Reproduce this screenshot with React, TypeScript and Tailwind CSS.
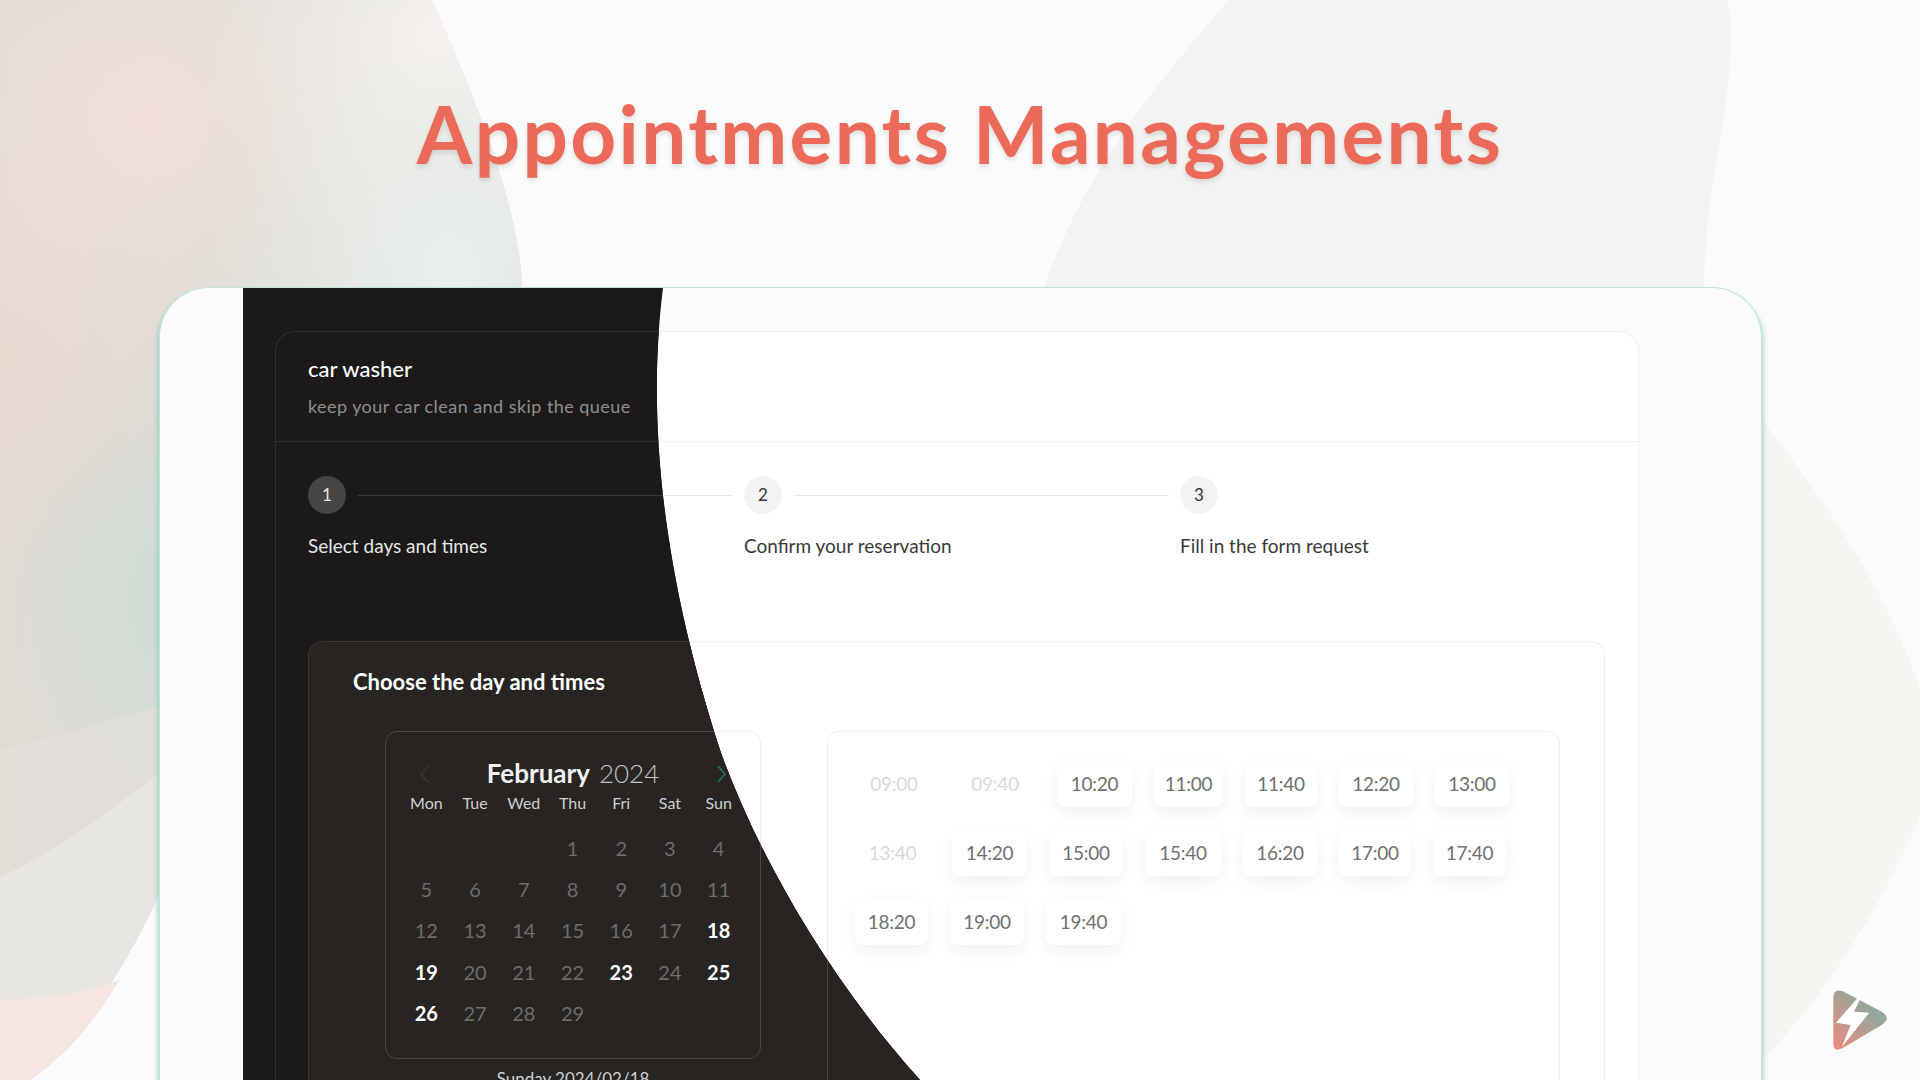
import React from "react";

const font = { fontFamily: "Lato, sans-serif" };

type Theme = {
  root: string; card: string; cardBorder: string; title: string; sub: string; stepOn: string; stepOff: string; stepLine: string; label: string;
  panel: string; panelTitle: string; box: string; month: string; year: string; dow: string; day: string; dayOn: string; chip: string; chipText: string; chipOff: string; foot: string;
};

const light: Theme = {
  root: "", card: "bg-white", cardBorder: "border-[#efefef]", title: "text-[#222]", sub: "text-[#777]", stepOn: "bg-[#f3f3f3] text-[#333]", stepOff: "bg-[#f3f3f3] text-[#333]", stepLine: "bg-[#e8e8e8]", label: "text-[#3a3a3a]",
  panel: "bg-white border-[#eeeeee]", panelTitle: "text-[#222]", box: "border-[#eeeeee]", month: "text-[#222]", year: "text-[#555]", dow: "text-[#555]", day: "text-[#999]", dayOn: "text-[#222]", chip: "bg-white shadow-[0_6px_16px_rgba(0,0,0,0.06)]", chipText: "text-[#6f6f6f]", chipOff: "text-[#d9d9d9]", foot: "text-[#333]",
};

const dark: Theme = {
  root: "bg-[#1b1a18]", card: "bg-[#1b1a18]", cardBorder: "border-[#302f2d]", title: "text-white", sub: "text-[#8f8e8c]", stepOn: "bg-[#474543] text-[#e5e5e5]", stepOff: "bg-[#474543] text-[#e5e5e5]", stepLine: "bg-[#3a3937]", label: "text-[#e6e6e6]",
  panel: "bg-[#272422] border-[#3a3836]", panelTitle: "text-white", box: "border-[#4a4846]", month: "text-[#f2f2f2]", year: "text-[#c4c4c4]", dow: "text-[#cfcfcf]", day: "text-[#6e6c6a]", dayOn: "text-white", chip: "bg-[#272422]", chipText: "text-[#aaa]", chipOff: "text-[#555]", foot: "text-[#d0d0d0]",
};

const weeks: (number | null)[][] = [
  [null, null, null, 1, 2, 3, 4],
  [5, 6, 7, 8, 9, 10, 11],
  [12, 13, 14, 15, 16, 17, 18],
  [19, 20, 21, 22, 23, 24, 25],
  [26, 27, 28, 29, null, null, null],
];
const activeDays = [18, 19, 23, 25, 26];

const slots = [
  { t: "09:00", w: "w-[78px]", off: true },
  { t: "09:40", w: "w-[80px]", off: true },
  { t: "10:20", w: "w-[75px]" },
  { t: "11:00", w: "w-[69px]" },
  { t: "11:40", w: "w-[72px]" },
  { t: "12:20", w: "w-[74px]" },
  { t: "13:00", w: "w-[74px]" },
  { t: "13:40", w: "w-[75px]", off: true },
  { t: "14:20", w: "w-[75px]" },
  { t: "15:00", w: "w-[74px]" },
  { t: "15:40", w: "w-[76px]" },
  { t: "16:20", w: "w-[74px]" },
  { t: "17:00", w: "w-[72px]" },
  { t: "17:40", w: "w-[73px]" },
  { t: "18:20", w: "w-[73px]" },
  { t: "19:00", w: "w-[74px]" },
  { t: "19:40", w: "w-[75px]" },
];

const steps = ["Select days and times", "Confirm your reservation", "Fill in the form request"];

const leftShape = "M0 0 H432 C480 110 520 210 522 288 L400 600 L160 892 C130 960 80 1040 30 1080 H0 Z";

function Screen({ th }: { th: Theme }) {
  return (
    <div className={`w-[1400px] h-[792px] pt-[43px] pl-[32px] ${th.root}`} style={font}>
      <div className={`w-[1364px] h-[749px] rounded-t-[20px] border-t border-x ${th.card} ${th.cardBorder}`}>
        <div className={`h-[110px] border-b pl-[32px] pt-[22px] ${th.cardBorder}`}>
          <div className={`text-[22px] leading-[30px] font-medium ${th.title}`}>car washer</div>
          <div className={`text-[18px] leading-[26px] mt-[9px] tracking-[0.45px] ${th.sub}`}>keep your car clean and skip the queue</div>
        </div>
        <div className="pl-[32px] pt-[34px] grid grid-cols-[436px_436px_200px] h-[199px]">
          {steps.map((s, i) => (
            <div key={s}>
              <div className="flex items-center h-[38px]">
                <div className={`w-[38px] h-[38px] rounded-full flex items-center justify-center text-[17px] ${i === 0 ? th.stepOn : th.stepOff}`}>{i + 1}</div>
                {i < 2 && <div className={`h-px ml-[12px] w-[375px] ${th.stepLine}`} />}
              </div>
              <div className={`mt-[19px] text-[19px] leading-[26px] ${th.label}`}>{s}</div>
            </div>
          ))}
        </div>
        <div className={`ml-[32px] w-[1297px] h-[440px] border rounded-t-[14px] ${th.panel}`}>
          <div className={`pl-[44px] pt-[25px] text-[22px] leading-[30px] font-bold ${th.panelTitle}`}>Choose the day and times</div>
          <div className="flex pl-[76px] pt-[34px] gap-[66px]">
            <div className="w-[376px]">
              <div className={`h-[328px] border rounded-[12px] relative ${th.box}`}>
                <svg className="absolute left-[33px] top-[32px]" width="12" height="20" viewBox="0 0 12 20" fill="none"><path d="M9 2 L2 10 L9 18" stroke="#2f3b36" strokeWidth="1.5" /></svg>
                <svg className="absolute left-[329px] top-[32px]" width="12" height="20" viewBox="0 0 12 20" fill="none"><path d="M3 2 L10 10 L3 18" stroke="#1f7a5c" strokeWidth="1.5" /></svg>
                <div className="text-center pt-[25px] text-[26px] leading-[32px]">
                  <span className={`font-bold ${th.month}`}>February</span>
                  <span className={`ml-[9px] font-light ${th.year}`}>2024</span>
                </div>
                <div className="grid grid-cols-7 w-[341px] ml-[16px]">
                  {["Mon", "Tue", "Wed", "Thu", "Fri", "Sat", "Sun"].map((d) => (
                    <div key={d} className={`text-center text-[16px] leading-[28px] ${th.dow}`}>{d}</div>
                  ))}
                </div>
                <div className="grid grid-cols-7 w-[341px] ml-[16px] mt-[10px] auto-rows-[41.4px]">
                  {weeks.flat().map((d, i) => (
                    <div key={i} className={`flex items-center justify-center text-[20px] ${d && activeDays.includes(d) ? `font-bold ${th.dayOn}` : th.day}`}>{d}</div>
                  ))}
                </div>
              </div>
              <div className={`text-center text-[17px] leading-[24px] mt-[8px] ${th.foot}`}>Sunday 2024/02/18</div>
            </div>
            <div className={`w-[733px] h-[400px] border rounded-t-[12px] px-[27px] pt-[29px] ${th.box}`}>
              <div className="flex flex-wrap w-[660px] gap-x-[22px] gap-y-[23px]">
                {slots.map((s) => (
                  <div key={s.t} className={`h-[46px] rounded-[8px] flex items-center justify-center text-[19px] tracking-[-0.3px] ${s.w} ${s.off ? th.chipOff : `${th.chip} ${th.chipText}`}`}>{s.t}</div>
                ))}
              </div>
            </div>
          </div>
        </div>
      </div>
    </div>
  );
}

export default function App() {
  return (
    <div className="relative w-[1920px] h-[1080px] overflow-hidden bg-[#fafbfa]">
      <svg className="absolute inset-0" width="1920" height="1080" viewBox="0 0 1920 1080" fill="none">
        <defs>
          <linearGradient id="base" gradientUnits="userSpaceOnUse" x1="0" y1="0" x2="200" y2="0">
            <stop offset="0" stopColor="#e1dbd5" />
            <stop offset="1" stopColor="#d8ddd7" />
          </linearGradient>
          <radialGradient id="peach" gradientUnits="userSpaceOnUse" cx="150" cy="120" r="290">
            <stop offset="0" stopColor="#f1e0d9" />
            <stop offset="1" stopColor="#f1e0d9" stopOpacity="0" />
          </radialGradient>
          <radialGradient id="peachLeft" gradientUnits="userSpaceOnUse" cx="0" cy="360" r="220">
            <stop offset="0" stopColor="#e8d9d1" />
            <stop offset="1" stopColor="#e8d9d1" stopOpacity="0" />
          </radialGradient>
          <radialGradient id="sage" gradientUnits="userSpaceOnUse" cx="190" cy="600" r="200">
            <stop offset="0" stopColor="#cfdcd5" />
            <stop offset="1" stopColor="#cfdcd5" stopOpacity="0" />
          </radialGradient>
          <radialGradient id="paleTop" gradientUnits="userSpaceOnUse" cx="440" cy="40" r="240">
            <stop offset="0" stopColor="#f6f2f0" />
            <stop offset="1" stopColor="#f6f2f0" stopOpacity="0" />
          </radialGradient>
          <radialGradient id="paleLow" gradientUnits="userSpaceOnUse" cx="450" cy="270" r="240">
            <stop offset="0" stopColor="#ecf0ed" />
            <stop offset="1" stopColor="#ecf0ed" stopOpacity="0" />
          </radialGradient>
          <linearGradient id="logo" x1="0" y1="1" x2="1" y2="0">
            <stop offset="0" stopColor="#ee8a7c" />
            <stop offset="0.7" stopColor="#93a79b" />
          </linearGradient>
        </defs>
        <path d={leftShape} fill="url(#base)" />
        <path d={leftShape} fill="url(#peachLeft)" />
        <path d={leftShape} fill="url(#sage)" />
        <path d={leftShape} fill="url(#peach)" />
        <path d={leftShape} fill="url(#paleTop)" />
        <path d={leftShape} fill="url(#paleLow)" />
        <path d="M0 749 C60 735 110 720 170 702 V892 L160 892 C130 960 80 1040 30 1080 H0 Z" fill="#e4e0da" fillOpacity="0.6" />
        <path d="M0 877 C60 850 110 810 170 765 V880 L160 892 C130 960 80 1040 30 1080 H0 Z" fill="#e8e7e2" fillOpacity="0.85" />
        <path d="M0 999 C60 1000 110 985 120 979 C90 1030 60 1060 30 1080 H0 Z" fill="#f6e6e2" />
        <path d="M1044 288 C1080 180 1150 90 1229 0 H1728 C1740 90 1705 170 1704 288 Z" fill="#f3f3f1" />
        <path d="M1755 410 C1800 470 1880 570 1920 688 V816 C1890 890 1820 1010 1755 1065 Z" fill="#f7f5f2" />
      </svg>

      <div className="relative h-[287px] flex items-center justify-center pb-[22px]">
        <h1 className="text-[80px] leading-none font-bold tracking-[2.35px] text-[#ec6a5a] [text-shadow:0_3px_5px_rgba(0,0,0,0.12)]" style={font}>
          Appointments Managements
        </h1>
      </div>

      <div className="relative ml-[159px] w-[1603px] h-[793px] rounded-t-[50px] border-t border-x border-[#bfe6da] bg-[#fafbfa] shadow-[-2px_4px_4px_rgba(140,205,185,0.65),2px_4px_4px_rgba(140,205,185,0.55)]">
        <div className="absolute left-0 right-0 top-0 bottom-0 overflow-hidden rounded-t-[49px]">
          <div className="absolute left-[83px] top-0">
            <Screen th={light} />
          </div>
          <div className="absolute left-[83px] top-0 [clip-path:path('M420_0C405_120_415_272_478_465C517_572_587_692_677_792L0_792L0_0Z')]">
            <Screen th={dark} />
          </div>
        </div>
      </div>

      <svg className="absolute right-0 bottom-0" width="140" height="120" viewBox="0 0 420 360" fill="none">
        <path d="M160 112 Q160 85 187 93 L305 155 Q335 175 305 195 L187 265 Q160 278 160 250 Z" fill="url(#logo)" />
        <path d="M252 92 L168 188 L212 195 L185 262 L268 158 L222 155 Z" fill="#fff" />
      </svg>
    </div>
  );
}
